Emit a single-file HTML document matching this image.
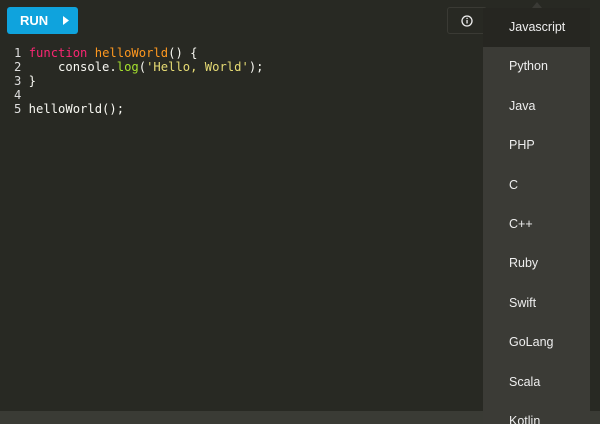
<!DOCTYPE html><html style="overflow:hidden;height:424px"><head><style>
body{margin:0;width:600px;height:424px;background:#282923;position:relative;overflow:hidden;font-family:"Liberation Sans",sans-serif}
.run{position:absolute;left:7px;top:7px;width:71px;height:27px;background:#0fa3dd;border-radius:3px;color:#fff;font-size:13px;font-weight:bold;line-height:27px;box-sizing:border-box;padding-left:13px}
.run svg{position:absolute;left:56px;top:9px}
.info{position:absolute;left:447px;top:7px;width:40px;height:27px;border:1px solid #3a3a34;border-radius:3px;box-sizing:border-box}
.code{position:absolute;left:14px;top:46px;font-family:"DejaVu Sans Mono","Liberation Mono",monospace;font-size:12.2px;line-height:14px;color:#f8f8f2;white-space:pre}
.n{color:#ddd}
.k{color:#f92672}.f{color:#fd971f}.g{color:#a6e22e}.s{color:#e6db74}
.bar{position:absolute;left:0;top:411px;width:600px;height:13px;background:#3a3b35}
.dd{position:absolute;left:483px;top:8px;width:107px;height:416px;overflow:hidden;background:#3b3b36}
.dd div{height:39.4px;line-height:39.4px;padding-left:26px;color:#eee;font-size:12.5px}
.dd div.sel{background:#262621}
.arr{position:absolute;left:532px;top:2px;width:0;height:0;border-left:5px solid transparent;border-right:5px solid transparent;border-bottom:6px solid #3a3a35}
</style></head><body>
<div class="run">RUN<svg width="6" height="9"><path d="M0 0L6 4.5L0 9Z" fill="#fff"/></svg></div>
<div class="info"><svg width="40" height="27" style="position:absolute;left:-1px;top:-1px"><circle cx="20" cy="14" r="5" fill="none" stroke="#eee" stroke-width="1.3"/><rect x="19.4" y="13" width="1.3" height="3.5" fill="#eee"/><rect x="19.4" y="10.8" width="1.3" height="1.3" fill="#eee"/></svg></div>
<div class="code"><span class="n">1</span> <span class="k">function</span> <span class="f">helloWorld</span>() {
<span class="n">2</span>     console.<span class="g">log</span>(<span class="s">'Hello, World'</span>);
<span class="n">3</span> }
<span class="n">4</span>
<span class="n">5</span> helloWorld();</div>
<div class="bar"></div>
<div class="arr"></div>
<div class="dd"><div class="sel">Javascript</div><div>Python</div><div>Java</div><div>PHP</div><div>C</div><div>C++</div><div>Ruby</div><div>Swift</div><div>GoLang</div><div>Scala</div><div>Kotlin</div></div>
</body></html>
